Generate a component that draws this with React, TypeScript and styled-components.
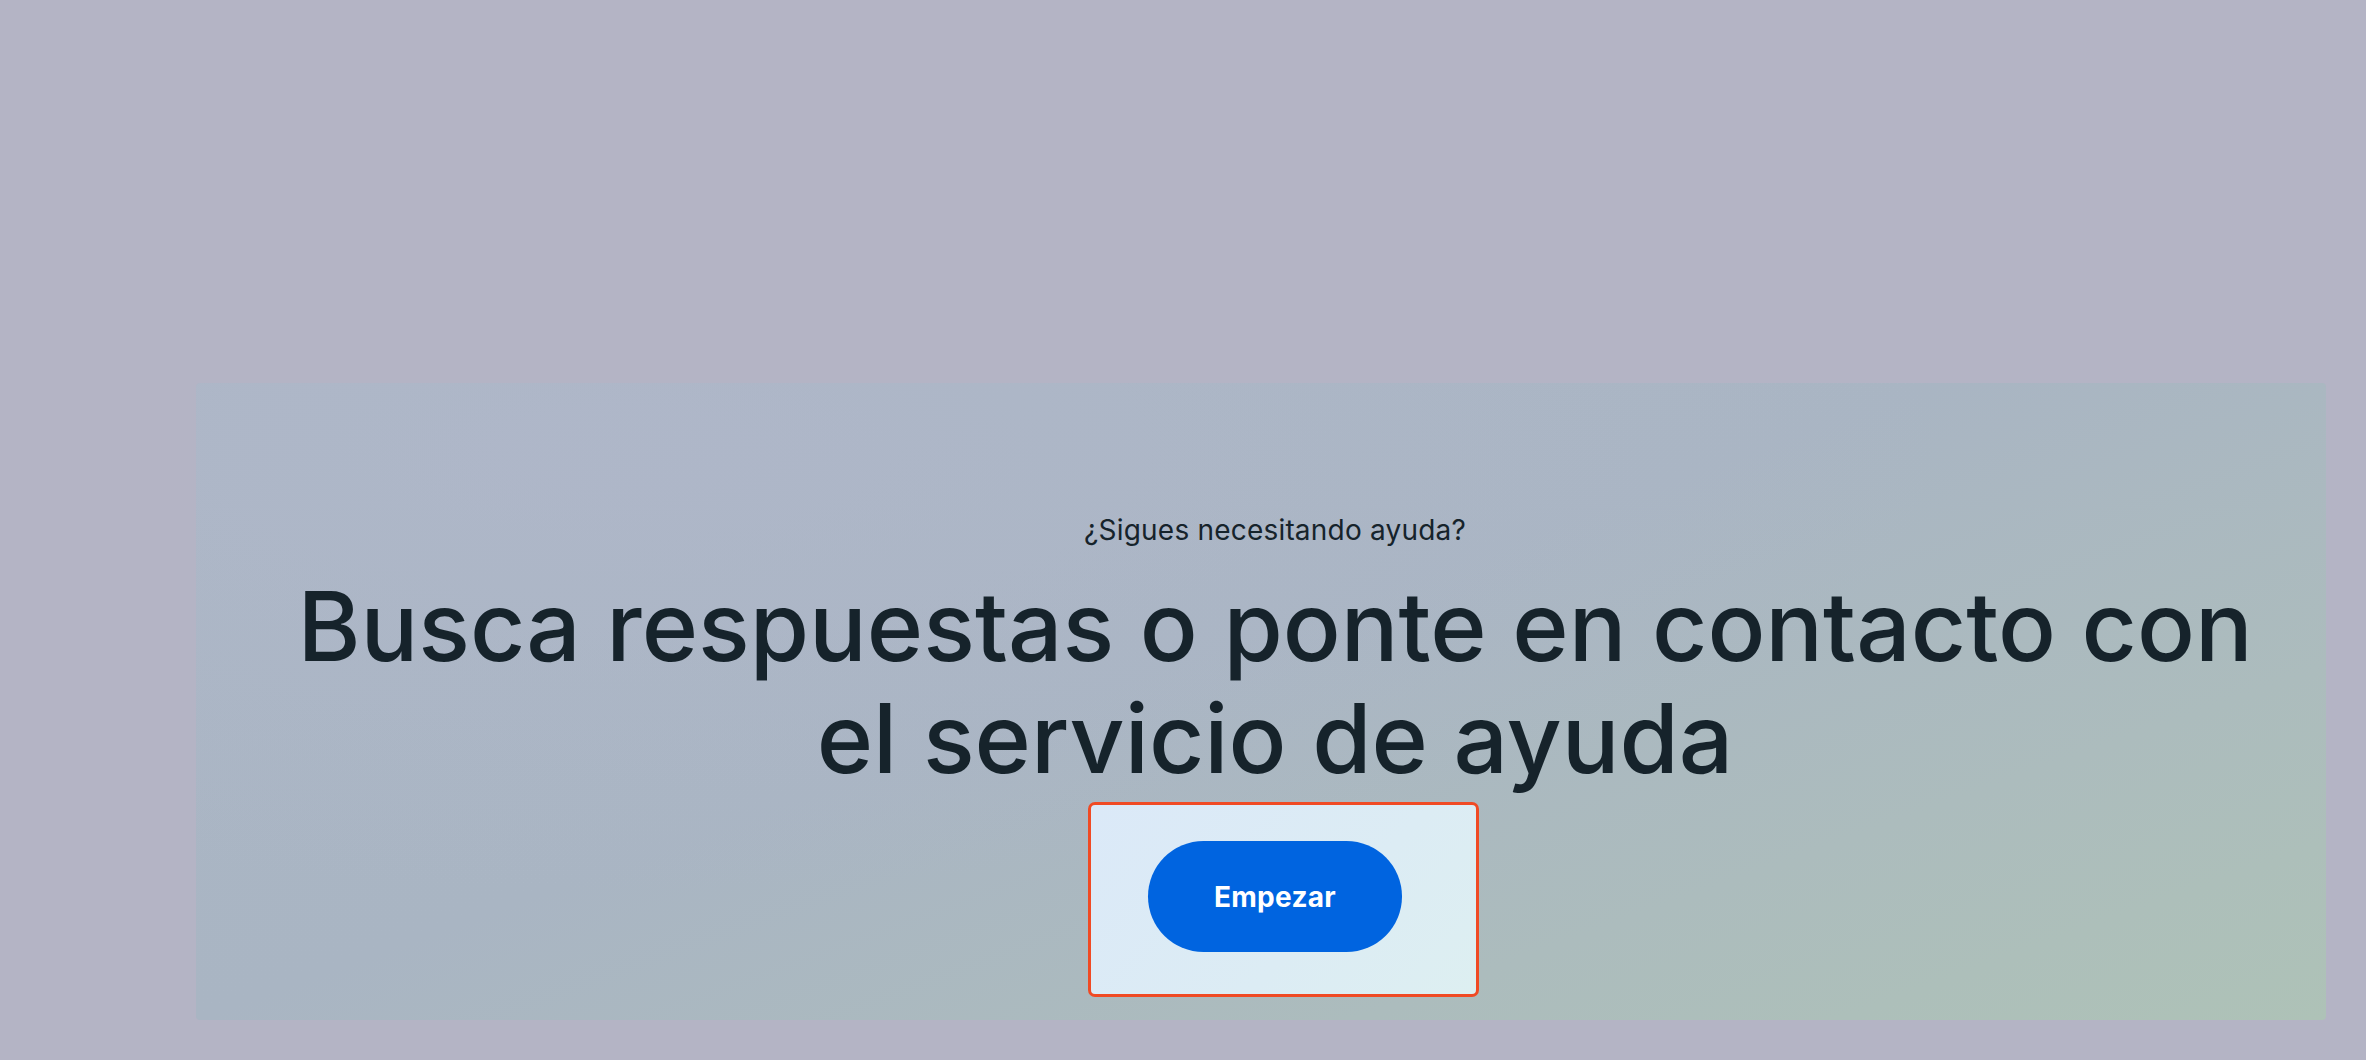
import styled, { createGlobalStyle } from 'styled-components';

const GlobalStyle = createGlobalStyle`
  html, body {
    margin: 0;
    padding: 0;
    background: #b4b4c5;
  }
  body {
    font-family: Inter, "Noto Sans", "Liberation Sans", sans-serif;
    -webkit-font-smoothing: antialiased;
  }
`;

const Page = styled.div`
  width: 100%;
  min-height: 1060px;
  box-sizing: border-box;
  padding: 383px 40px 40px 196px;
  background: #b4b4c5;
`;

const HelpPanel = styled.section`
  width: 2130px;
  height: 637px;
  box-sizing: border-box;
  padding: 128px 0 0 28px;
  display: flex;
  flex-direction: column;
  align-items: center;
  border-radius: 4px;
  background:
    radial-gradient(ellipse at 20% 10%, rgba(178, 184, 204, 0.55), transparent 55%),
    linear-gradient(160deg, #abb6c5 0%, #a9b5c3 45%, #acbcbd 75%, #aec2b7 100%);
`;

const Eyebrow = styled.p`
  margin: 0;
  font-size: 28px;
  line-height: 38px;
  font-weight: 400;
  letter-spacing: 0.2px;
  color: #16232b;
`;

const Heading = styled.h2`
  margin: 21px 0 0;
  max-width: 2000px;
  font-size: 96px;
  line-height: 112px;
  font-weight: 500;
  text-align: center;
  color: #16232b;
`;

const Highlight = styled.div`
  margin: 8px 0 0 16px;
  width: 391px;
  height: 195px;
  box-sizing: border-box;
  border: 3px solid #f04a24;
  border-radius: 7px;
  padding: 0 16px 6px 0;
  display: flex;
  align-items: center;
  justify-content: center;
  background: linear-gradient(135deg, #dbe9f8 0%, #dcecf4 60%, #ddeff1 100%);
`;

const PrimaryButton = styled.button`
  width: 254px;
  height: 111px;
  flex-shrink: 0;
  border: none;
  border-radius: 56px;
  background: #0064e0;
  color: #ffffff;
  font-family: Inter, "Noto Sans", "Liberation Sans", sans-serif;
  font-size: 28px;
  font-weight: 700;
  letter-spacing: 0.3px;
  cursor: pointer;
`;

export default function App() {
  return (
    <>
      <GlobalStyle />
      <Page>
        <HelpPanel>
          <Eyebrow>¿Sigues necesitando ayuda?</Eyebrow>
          <Heading>Busca respuestas o ponte en contacto con el servicio de ayuda</Heading>
          <Highlight>
            <PrimaryButton>Empezar</PrimaryButton>
          </Highlight>
        </HelpPanel>
      </Page>
    </>
  );
}
